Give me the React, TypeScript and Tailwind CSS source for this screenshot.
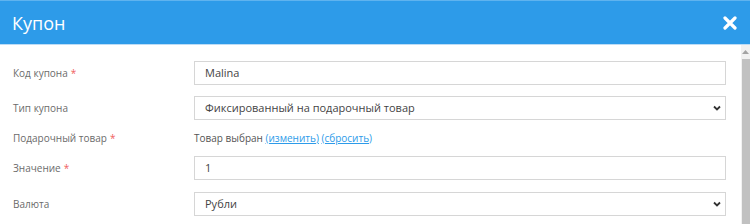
import React from "react";

const Chevron = () => (
  <svg width="8" height="6" viewBox="0 0 8 6" className="absolute right-[4px] top-1/2 -translate-y-1/2">
    <path d="M1 1.5 L4 4.5 L7 1.5" stroke="#333" strokeWidth="1.8" fill="none" />
  </svg>
);

const Star = () => <span className="text-[#f06060] ml-[3px]">*</span>;

const Row = ({ label, star, children, cls }: { label: string; star?: boolean; children: React.ReactNode; cls: string }) => (
  <div className={`flex items-center ${cls}`}>
    <div className="w-[181px] text-[10px] text-[#6b6b6b] shrink-0">
      {label}
      {star && <Star />}
    </div>
    <div className="flex-1">{children}</div>
  </div>
);

const Box = ({ text, select }: { text: string; select?: boolean }) => (
  <div className="relative h-[24px] border border-[#d6d6d6] flex items-center pl-[10px] text-[11px] text-[#444] bg-white">
    {text}
    {select && <Chevron />}
  </div>
);

export default function App() {
  return (
    <div className="w-[750px] h-[224px] overflow-hidden bg-white" style={{ fontFamily: '"Open Sans", sans-serif' }}>
      <div className="h-[45px] bg-[#2d9be9] border-t border-t-[#5fb3ef] border-b border-b-[#bcdcf6] flex items-center justify-between pl-[12px] pr-[13px]">
        <div className="text-white text-[18px] leading-none">Купон</div>
        <svg width="14" height="14" viewBox="0 0 14 14">
          <path d="M2 2 L12 12 M12 2 L2 12" stroke="white" strokeWidth="3.2" strokeLinecap="round" />
        </svg>
      </div>
      <div className="flex h-[179px]">
        <div className="flex-1 pl-[13px] pr-[15px] pt-[16px]">
          <Row label="Код купона" star cls="mb-[11px]">
            <Box text="Malina" />
          </Row>
          <Row label="Тип купона" cls="mb-[11px]">
            <Box text="Фиксированный на подарочный товар" select />
          </Row>
          <Row label="Подарочный товар" star cls="h-[14px] mb-[11px]">
            <div className="text-[10px] text-[#555]">
              Товар выбран{" "}
              <span className="text-[#2d9be9] underline">(изменить)</span>{" "}
              <span className="text-[#2d9be9] underline">(сбросить)</span>
            </div>
          </Row>
          <Row label="Значение" star cls="mb-[12px]">
            <Box text="1" />
          </Row>
          <Row label="Валюта" cls="">
            <Box text="Рубли" select />
          </Row>
        </div>
        <div className="w-[9px] bg-[#f1f1f1] flex flex-col items-center">
          <svg width="7" height="4" viewBox="0 0 7 4" className="mt-[5px]">
            <path d="M0 4 L3.5 0 L7 4 Z" fill="#a3a3a3" />
          </svg>
          <div className="mt-[5px] w-[8px] flex-1 bg-[#c1c1c1]" />
        </div>
      </div>
    </div>
  );
}
